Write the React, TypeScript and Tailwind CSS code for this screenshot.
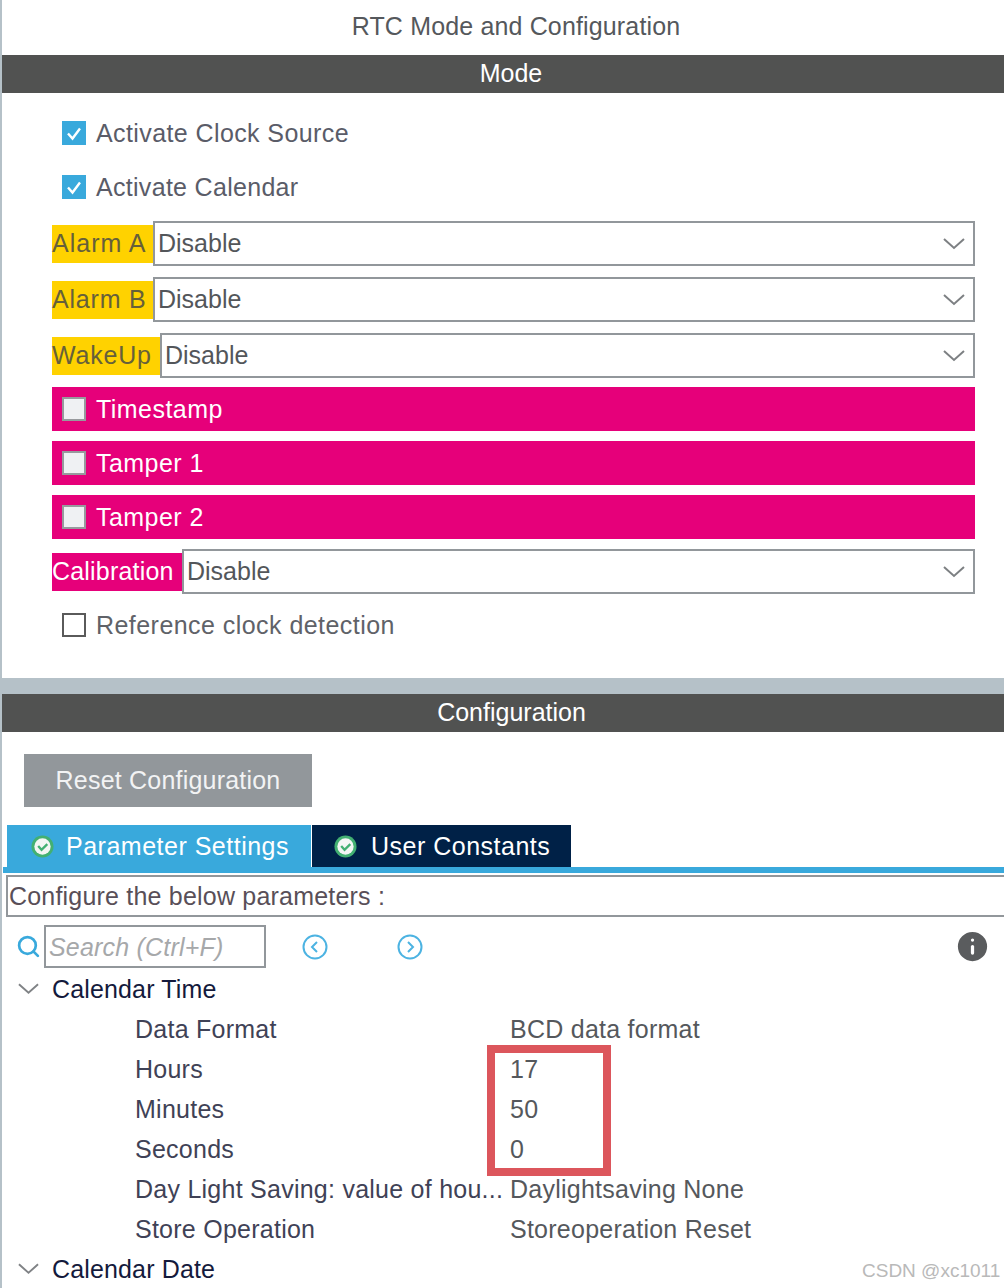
import { Info, Search } from 'lucide-react';

const font = "font-['Liberation_Sans',Arial,sans-serif]";

function Chevron({ className }: { className: string }) {
  return (
    <svg viewBox="0 0 22 12" className={className} fill="none" stroke="currentColor" strokeWidth="2">
      <path d="M1 1l10 9 10-9" />
    </svg>
  );
}

function Check({ state }: { state: 'on' | 'off' | 'disabled' }) {
  if (state === 'on') {
    return (
      <span className="flex h-6 w-6 shrink-0 items-center justify-center bg-[#39a9dc]">
        <svg viewBox="0 0 24 24" className="h-6 w-6" fill="none" stroke="white" strokeWidth="2.4">
          <path d="M6 12.5l4.5 5L18 7.5" />
        </svg>
      </span>
    );
  }
  if (state === 'disabled') {
    return <span className="h-6 w-6 shrink-0 border-2 border-[#979a9d] bg-[#eff1f3]" />;
  }
  return <span className="h-6 w-6 shrink-0 border-2 border-[#5a5a5a] bg-white" />;
}

function SelectRow({ label, labelClass, tone, mt }: { label: string; labelClass: string; tone: string; mt: string }) {
  return (
    <div className={`flex h-[45px] items-center ${mt}`}>
      <div className={`flex h-[38px] shrink-0 items-center ${labelClass} ${tone}`}>{label}</div>
      <div className="flex h-[45px] flex-1 items-center justify-between border-2 border-[#92979b] bg-white pl-[3px] pr-[8px] text-[#53565a]">
        <span>Disable</span>
        <Chevron className="h-[12px] w-[22px] text-[#7d8083]" />
      </div>
    </div>
  );
}

function PinkRow({ label, mt }: { label: string; mt: string }) {
  return (
    <div className={`flex h-[44px] items-center gap-[10px] bg-[#e6007a] pl-[10px] text-white ${mt}`}>
      <Check state="disabled" />
      <span className="tracking-[0.45px]">{label}</span>
    </div>
  );
}

function ParamRow({ name, value }: { name: string; value: string }) {
  return (
    <div className="flex h-[40px] items-center tracking-[0.25px] text-[#3f4256]">
      <span className="w-[508px] shrink-0 whitespace-nowrap pl-[133px]">{name}</span>
      <span className="text-[#55585c]">{value}</span>
    </div>
  );
}

function GroupRow({ title }: { title: string }) {
  return (
    <div className="flex h-[40px] items-center tracking-[0.15px] text-[#141a3c]">
      <Chevron className="ml-[16px] mr-[13px] h-[12px] w-[21px] text-[#808386]" />
      <span>{title}</span>
    </div>
  );
}

export default function App() {
  return (
    <div className={`${font} h-[1288px] w-[1004px] overflow-hidden bg-[#b5c1c8] pl-[2px] text-[25px] leading-none`}>
      <div className="h-[678px] bg-white">
        <div className="flex h-[55px] items-center justify-center pb-[3px] pl-[26px] tracking-[0.15px] text-[#55585c]">RTC Mode and Configuration</div>
        <div className="flex h-[38px] items-center justify-center bg-[#515251] pb-[2px] pl-[16px] text-white">Mode</div>

        <div className="pl-[50px] pr-[29px] text-[#5a5c68]">
          <div className="flex h-[24px] items-center gap-[10px] pl-[10px] mt-[28px]">
            <Check state="on" />
            <span className="tracking-[0.4px]">Activate Clock Source</span>
          </div>
          <div className="flex h-[24px] items-center gap-[10px] pl-[10px] mt-[30px]">
            <Check state="on" />
            <span className="tracking-[0.3px]">Activate Calendar</span>
          </div>

          <SelectRow label="Alarm A" labelClass="w-[101px] bg-[#ffd200] tracking-[1px]" tone="text-[#66603a]" mt="mt-[22px]" />
          <SelectRow label="Alarm B" labelClass="w-[101px] bg-[#ffd200] tracking-[0.8px]" tone="text-[#66603a]" mt="mt-[11px]" />
          <SelectRow label="WakeUp" labelClass="w-[108px] bg-[#ffd200] tracking-[0.8px]" tone="text-[#66603a]" mt="mt-[11px]" />

          <PinkRow label="Timestamp" mt="mt-[9px]" />
          <PinkRow label="Tamper 1" mt="mt-[10px]" />
          <PinkRow label="Tamper 2" mt="mt-[10px]" />

          <SelectRow label="Calibration" labelClass="w-[130px] bg-[#e6007a] tracking-[0.2px]" tone="text-white" mt="mt-[10px]" />

          <div className="mt-[19px] flex h-[24px] items-center gap-[10px] pl-[10px]">
            <Check state="off" />
            <span className="tracking-[0.45px] text-[#606268]">Reference clock detection</span>
          </div>
        </div>
      </div>

      <div className="mt-[16px] h-[594px] bg-white">
        <div className="flex h-[38px] items-center justify-center bg-[#515251] pb-[2px] pl-[17px] text-white">Configuration</div>

        <div className="ml-[22px] mt-[22px] flex h-[53px] w-[288px] items-center justify-center bg-[#92979b] tracking-[0.2px] text-[#f2f3f4]">
          Reset Configuration
        </div>

        <div className="ml-[5px] mt-[18px] flex h-[42px] items-stretch">
          <div className="flex w-[304px] items-center bg-[#39a9dc] pl-[24px] tracking-[0.5px] text-white">
            <TabIcon />
            <span className="ml-[12px]">Parameter Settings</span>
          </div>
          <div className="ml-px flex w-[259px] items-center bg-[#002147] pl-[22px] tracking-[0.5px] text-white">
            <TabIcon />
            <span className="ml-[14px]">User Constants</span>
          </div>
        </div>
        <div className="ml-px h-[6px] bg-[#39a9dc]" />

        <div className="ml-[4px] mt-[2px] flex h-[42px] items-center border-2 border-r-0 border-[#92979b] pl-px tracking-[0.2px] text-[#594f58]">
          Configure the below parameters :
        </div>

        <div className="mt-[8px] flex h-[43px] items-center">
          <Search className="ml-[14px] h-[25px] w-[25px] text-[#39a9dc]" strokeWidth={2.6} />
          <div className="ml-[3px] flex h-[43px] w-[222px] items-center border-2 border-[#92979b] pl-[3px] pt-[2px] italic tracking-[0.2px] text-[#a6a8aa]">
            Search (Ctrl+F)
          </div>
          <NavArrow dir="left" className="ml-[36px]" />
          <NavArrow dir="right" className="ml-[69px]" />
          <Info className="ml-auto mr-[12px] h-[39px] w-[39px] fill-[#5a5c5e] text-white" strokeWidth={2} />
        </div>

        <div className="mt-px">
          <GroupRow title="Calendar Time" />
          <ParamRow name="Data Format" value="BCD data format" />
          <ParamRow name="Hours" value="17" />
          <ParamRow name="Minutes" value="50" />
          <ParamRow name="Seconds" value="0" />
          <ParamRow name="Day Light Saving: value of hou..." value="Daylightsaving None" />
          <ParamRow name="Store Operation" value="Storeoperation Reset" />
          <GroupRow title="Calendar Date" />
        </div>
      </div>

      {/* red highlight drawn over the screenshot */}
      <div className="absolute left-[487px] top-[1045px] h-[131px] w-[124px] border-[8px] border-[#dc565c]" />
      <div className="absolute left-[862px] top-[1261px] text-[19px] text-[#b9b9b9]">CSDN @xc1011</div>
    </div>
  );
}

function TabIcon() {
  return (
    <svg viewBox="0 0 24 24" className="h-[23px] w-[23px] shrink-0">
      <circle cx="12" cy="12" r="11.5" fill="#43b072" />
      <circle cx="12" cy="12" r="8.5" fill="#f4f6f4" />
      <path d="M7.5 11.5l3.5 4 6-6" fill="none" stroke="#43b072" strokeWidth="2.4" />
    </svg>
  );
}

function NavArrow({ dir, className }: { dir: 'left' | 'right'; className: string }) {
  return (
    <svg viewBox="0 0 26 26" className={`h-[26px] w-[26px] shrink-0 ${className}`} fill="none" stroke="#4cb3e2" strokeWidth="2">
      <circle cx="13" cy="13" r="11.5" />
      <path d={dir === 'left' ? 'M15 8l-5 5 5 5' : 'M11 8l5 5-5 5'} />
    </svg>
  );
}
